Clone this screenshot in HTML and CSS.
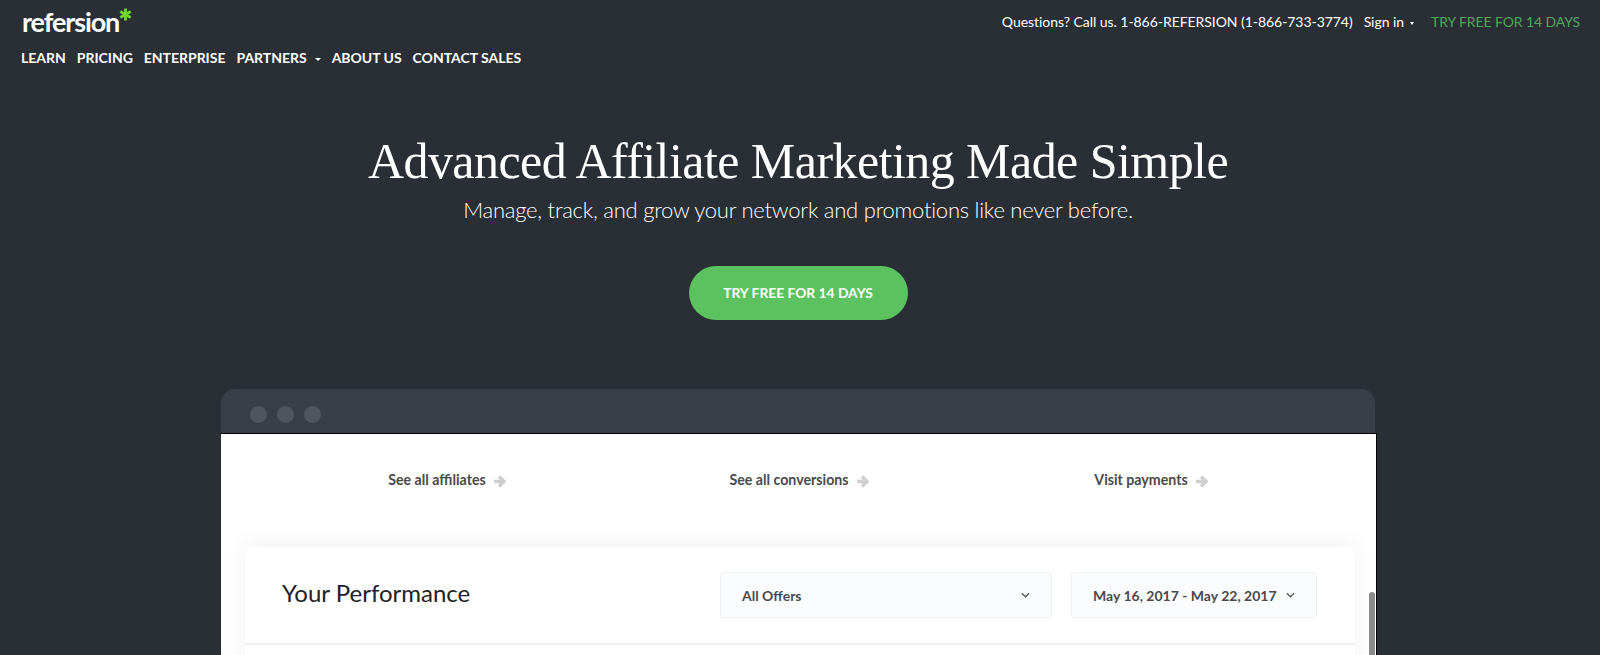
FILE: index.html
```html
<!DOCTYPE html>
<html lang="en">
<head>
    <meta charset="UTF-8">
    <meta name="viewport" content="width=device-width, initial-scale=1.0">
    <title>Refersion</title>
    <link rel="stylesheet" href="styles.css">
</head>
<body>

    <!-- Top bar: logo, nav and contact info -->
    <header class="site-header">
        <div class="header-left">
            <a class="logo" href="#">refersion<svg class="logo-star" viewBox="0 0 12 12" width="13" height="13"><path d="M6 0.5V11.5M1.2 3.2L10.8 8.8M10.8 3.2L1.2 8.8" stroke="#6fd42b" stroke-width="2.6" fill="none"/></svg></a>
            <nav class="main-nav">
                <a href="#">LEARN</a>
                <a href="#">PRICING</a>
                <a href="#">ENTERPRISE</a>
                <a href="#">PARTNERS<span class="caret"></span></a>
                <a href="#">ABOUT US</a>
                <a href="#">CONTACT SALES</a>
            </nav>
        </div>
        <div class="header-right">
            <span>Questions? Call us. 1-866-REFERSION (1-866-733-3774)</span>
            <a href="#">Sign in<span class="caret small"></span></a>
            <a class="try-link" href="#">TRY FREE FOR 14 DAYS</a>
        </div>
    </header>

    <!-- Hero -->
    <section class="hero">
        <h1>Advanced Affiliate Marketing Made Simple</h1>
        <p>Manage, track, and grow your network and promotions like never before.</p>
        <a class="cta" href="#">TRY FREE FOR 14 DAYS</a>
    </section>

    <!-- App preview window -->
    <div class="app-window">
        <div class="title-bar">
            <span class="dot"></span>
            <span class="dot"></span>
            <span class="dot"></span>
        </div>
        <div class="app-body">
            <div class="quick-links">
                <a href="#">See all affiliates<svg class="arrow" viewBox="0 0 13 13"><path d="M1 6.5H10M6 1.5L11 6.5L6 11.5" stroke="#cfcfcf" stroke-width="3.4" fill="none"/></svg></a>
                <a href="#">See all conversions<svg class="arrow" viewBox="0 0 13 13"><path d="M1 6.5H10M6 1.5L11 6.5L6 11.5" stroke="#cfcfcf" stroke-width="3.4" fill="none"/></svg></a>
                <a href="#">Visit payments<svg class="arrow" viewBox="0 0 13 13"><path d="M1 6.5H10M6 1.5L11 6.5L6 11.5" stroke="#cfcfcf" stroke-width="3.4" fill="none"/></svg></a>
            </div>
            <div class="card">
                <div class="card-head">
                    <h2>Your Performance</h2>
                    <div class="select offers">All Offers<svg class="chevron" viewBox="0 0 10 6"><path d="M1 1L5 5L9 1" stroke="#555" stroke-width="1.4" fill="none"/></svg></div>
                    <div class="select dates">May 16, 2017 - May 22, 2017<svg class="chevron" viewBox="0 0 10 6"><path d="M1 1L5 5L9 1" stroke="#555" stroke-width="1.4" fill="none"/></svg></div>
                </div>
            </div>
            <div class="scroll-thumb"></div>
        </div>
    </div>

</body>
</html>
```

FILE: styles.css
```css
html, body {
    height: 655px;
    overflow: hidden;
}
body {
    margin: 0;
    background-color: #2a2e35;
    color: #fff;
    font-family: Lato, "Open Sans", sans-serif;
}
a {
    color: inherit;
    text-decoration: none;
}
/* Top bar */
.site-header {
    display: flex;
    justify-content: space-between;
    align-items: flex-start;
    padding: 0 20px 0 21px;
}
.logo {
    display: flex;
    align-items: flex-start;
    height: 33px;
    margin: 8px 0 0 1px;
    font-size: 27px;
    font-weight: 700;
    line-height: 28px;
    letter-spacing: -1.1px;
}
.main-nav {
    display: flex;
    gap: 11px;
    margin-top: 8px;
    font-size: 14px;
    font-weight: 700;
    line-height: 17px;
    letter-spacing: -0.02px;
}
.caret {
    display: inline-block;
    margin-left: 8px;
    vertical-align: middle;
    border-top: 3px solid #fff;
    border-left: 3px solid transparent;
    border-right: 3px solid transparent;
}
.caret.small {
    margin-left: 6px;
    border-left-width: 2.5px;
    border-right-width: 2.5px;
}
.header-right {
    display: flex;
    gap: 11px;
    margin-top: 13px;
    font-size: 14px;
    line-height: 18px;
    letter-spacing: -0.05px;
}
.try-link {
    margin-left: 6px;
    color: #52a65c;
    letter-spacing: -0.1px;
}
/* Hero */
.hero {
    display: flex;
    flex-direction: column;
    align-items: center;
    margin-top: 65px;
    padding-right: 4px;
}
.hero h1 {
    margin: 0;
    font-family: "Liberation Serif", serif;
    font-size: 50px;
    font-weight: 400;
    line-height: 60px;
    letter-spacing: -0.55px;
}
.hero p {
    margin: 5px 0 0;
    font-size: 22px;
    font-weight: 300;
    line-height: 28px;
    letter-spacing: -0.24px;
}
.cta {
    margin-top: 42px;
    width: 219px;
    height: 54px;
    border-radius: 27px;
    background-color: #5cc15f;
    font-size: 13.8px;
    font-weight: 700;
    line-height: 54px;
    text-align: center;
}
/* App preview */
.app-window {
    width: 1156px;
    margin: 69px 0 0 221px;
}
.title-bar {
    display: flex;
    align-items: center;
    gap: 10px;
    height: 44px;
    width: 1154px;
    padding: 6px 0 0 29px;
    box-sizing: border-box;
    background-color: #393f49;
    border-radius: 14px 14px 0 0;
}
.dot {
    width: 17px;
    height: 17px;
    border-radius: 50%;
    background-color: #50565f;
}
.app-body {
    position: relative;
    height: 222px;
    overflow: hidden;
    box-sizing: border-box;
    background-color: #fff;
    color: #4a4a4a;
    border-top: 1px solid #000;
    border-right: 1px solid #000;
}
.quick-links {
    display: grid;
    grid-template-columns: repeat(3, 1fr);
    width: 1056px;
    margin-left: 50px;
    padding-top: 36px;
    font-size: 14.2px;
    font-weight: 700;
    line-height: 20px;
    text-align: center;
}
.arrow {
    width: 13px;
    height: 13px;
    margin-left: 7px;
    vertical-align: -3px;
}
.card {
    width: 1110px;
    height: 200px;
    margin: 57px 0 0 24px;
    background-color: #fff;
    box-shadow: 0 -4px 22px rgba(0, 0, 0, 0.06);
}
.card-head {
    display: flex;
    align-items: center;
    height: 98px;
    padding: 0 38px 0 37px;
    box-sizing: border-box;
    border-bottom: 2px solid #f0f1f3;
}
.card-head h2 {
    flex: 1;
    margin: 0;
    padding-bottom: 6px;
    color: #222;
    font-size: 24px;
    font-weight: 400;
}
.select {
    display: flex;
    align-items: center;
    justify-content: space-between;
    height: 46px;
    box-sizing: border-box;
    padding: 0 21px;
    background-color: #fbfcfe;
    border: 1px solid #f0f1f3;
    border-radius: 3px;
    font-size: 14px;
    font-weight: 700;
}
.offers {
    width: 332px;
    margin-right: 19px;
}
.dates {
    width: 246px;
}
.chevron {
    width: 9px;
    height: 6px;
}
.scroll-thumb {
    position: absolute;
    top: 158px;
    right: 1px;
    bottom: 0;
    width: 6px;
    border-radius: 3px 3px 0 0;
    background-color: #8a8a8a;
}
```
